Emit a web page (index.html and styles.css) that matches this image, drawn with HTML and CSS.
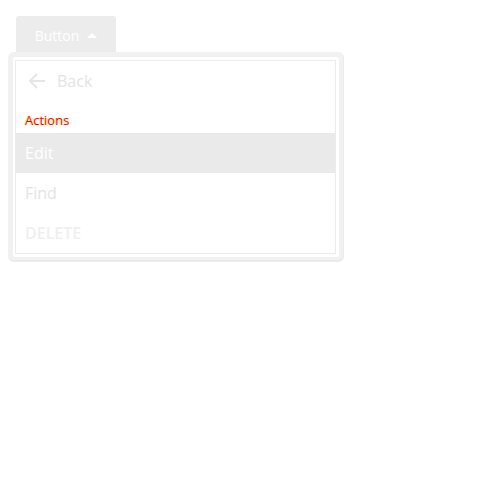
FILE: index.html
```html
<!DOCTYPE html>
<html lang="en">

<head>
    <meta charset="UTF-8" />
    <title>Menu</title>
    <link rel="stylesheet" href="styles.css">
</head>

<body>
    <div class="dropdown">
        <button class="trigger">Button <span class="caret"></span></button>
        <div class="menu-shell">
            <div class="menu">
                <ul class="menu-list">
                    <li class="menu-item back">
                        <svg class="back-icon" width="18" height="18" viewBox="0 0 18 18">
                            <path d="M17 9H2M9 2L2 9l7 7" fill="none" stroke="currentColor" stroke-width="2" />
                        </svg>
                        Back
                    </li>
                    <li class="menu-header">Actions</li>
                    <li class="menu-item active">Edit</li>
                    <li class="menu-item">Find</li>
                    <li class="menu-item danger">DELETE</li>
                </ul>
            </div>
        </div>
    </div>
</body>

</html>
```

FILE: styles.css
```css
:root {
    --shell: #f1f1f1;
    --line: #ececec;
    --muted: #e4e4e4;
    --active-bg: #eaeaea;
    --button-bg: #ececec;
}

body {
    font-family: 'Open Sans', sans-serif;
    margin: 0;
    padding: 16px 8px;
    background: #fff;
}

.dropdown {
    display: flex;
    flex-direction: column;
    align-items: flex-start;
}

.trigger {
    margin-left: 8px;
    width: 100px;
    height: 36px;
    border: none;
    border-radius: 3px 3px 0 0;
    background: var(--button-bg);
    color: #fff;
    font-family: inherit;
    font-size: 14px;
    padding: 2px 0 0;
    display: flex;
    align-items: center;
    justify-content: center;
    gap: 8px;
}

.caret {
    width: 0;
    height: 0;
    border-left: 5px solid transparent;
    border-right: 5px solid transparent;
    border-bottom: 5px solid #fff;
}

.menu-shell {
    width: 326px;
    padding: 5px;
    background: var(--shell);
    border-radius: 6px;
    box-shadow: inset -1px -2px 0 #ebebeb;
}

.menu {
    background: #fff;
    padding: 3px 3px 3px 2px;
    border-radius: 2px;
}

.menu-list {
    list-style: none;
    margin: 0;
    padding: 0;
    border: 1px solid var(--line);
}

.menu-item {
    height: 40px;
    display: flex;
    align-items: center;
    padding: 0 9px;
    font-size: 16px;
    color: var(--muted);
}

.back {
    gap: 11px;
    padding-left: 12px;
}

.back-icon {
    color: #e6e6e6;
}

.menu-header {
    height: 32px;
    display: flex;
    align-items: flex-end;
    padding: 0 9px 4px;
    box-sizing: border-box;
    font-size: 13px;
    color: #ff0000;
    text-shadow: -1px 0 0 rgba(255, 230, 0, 0.7);
}

.active {
    background: var(--active-bg);
    color: #fff;
}

.danger {
    font-weight: 600;
    color: #efefef;
}
```
